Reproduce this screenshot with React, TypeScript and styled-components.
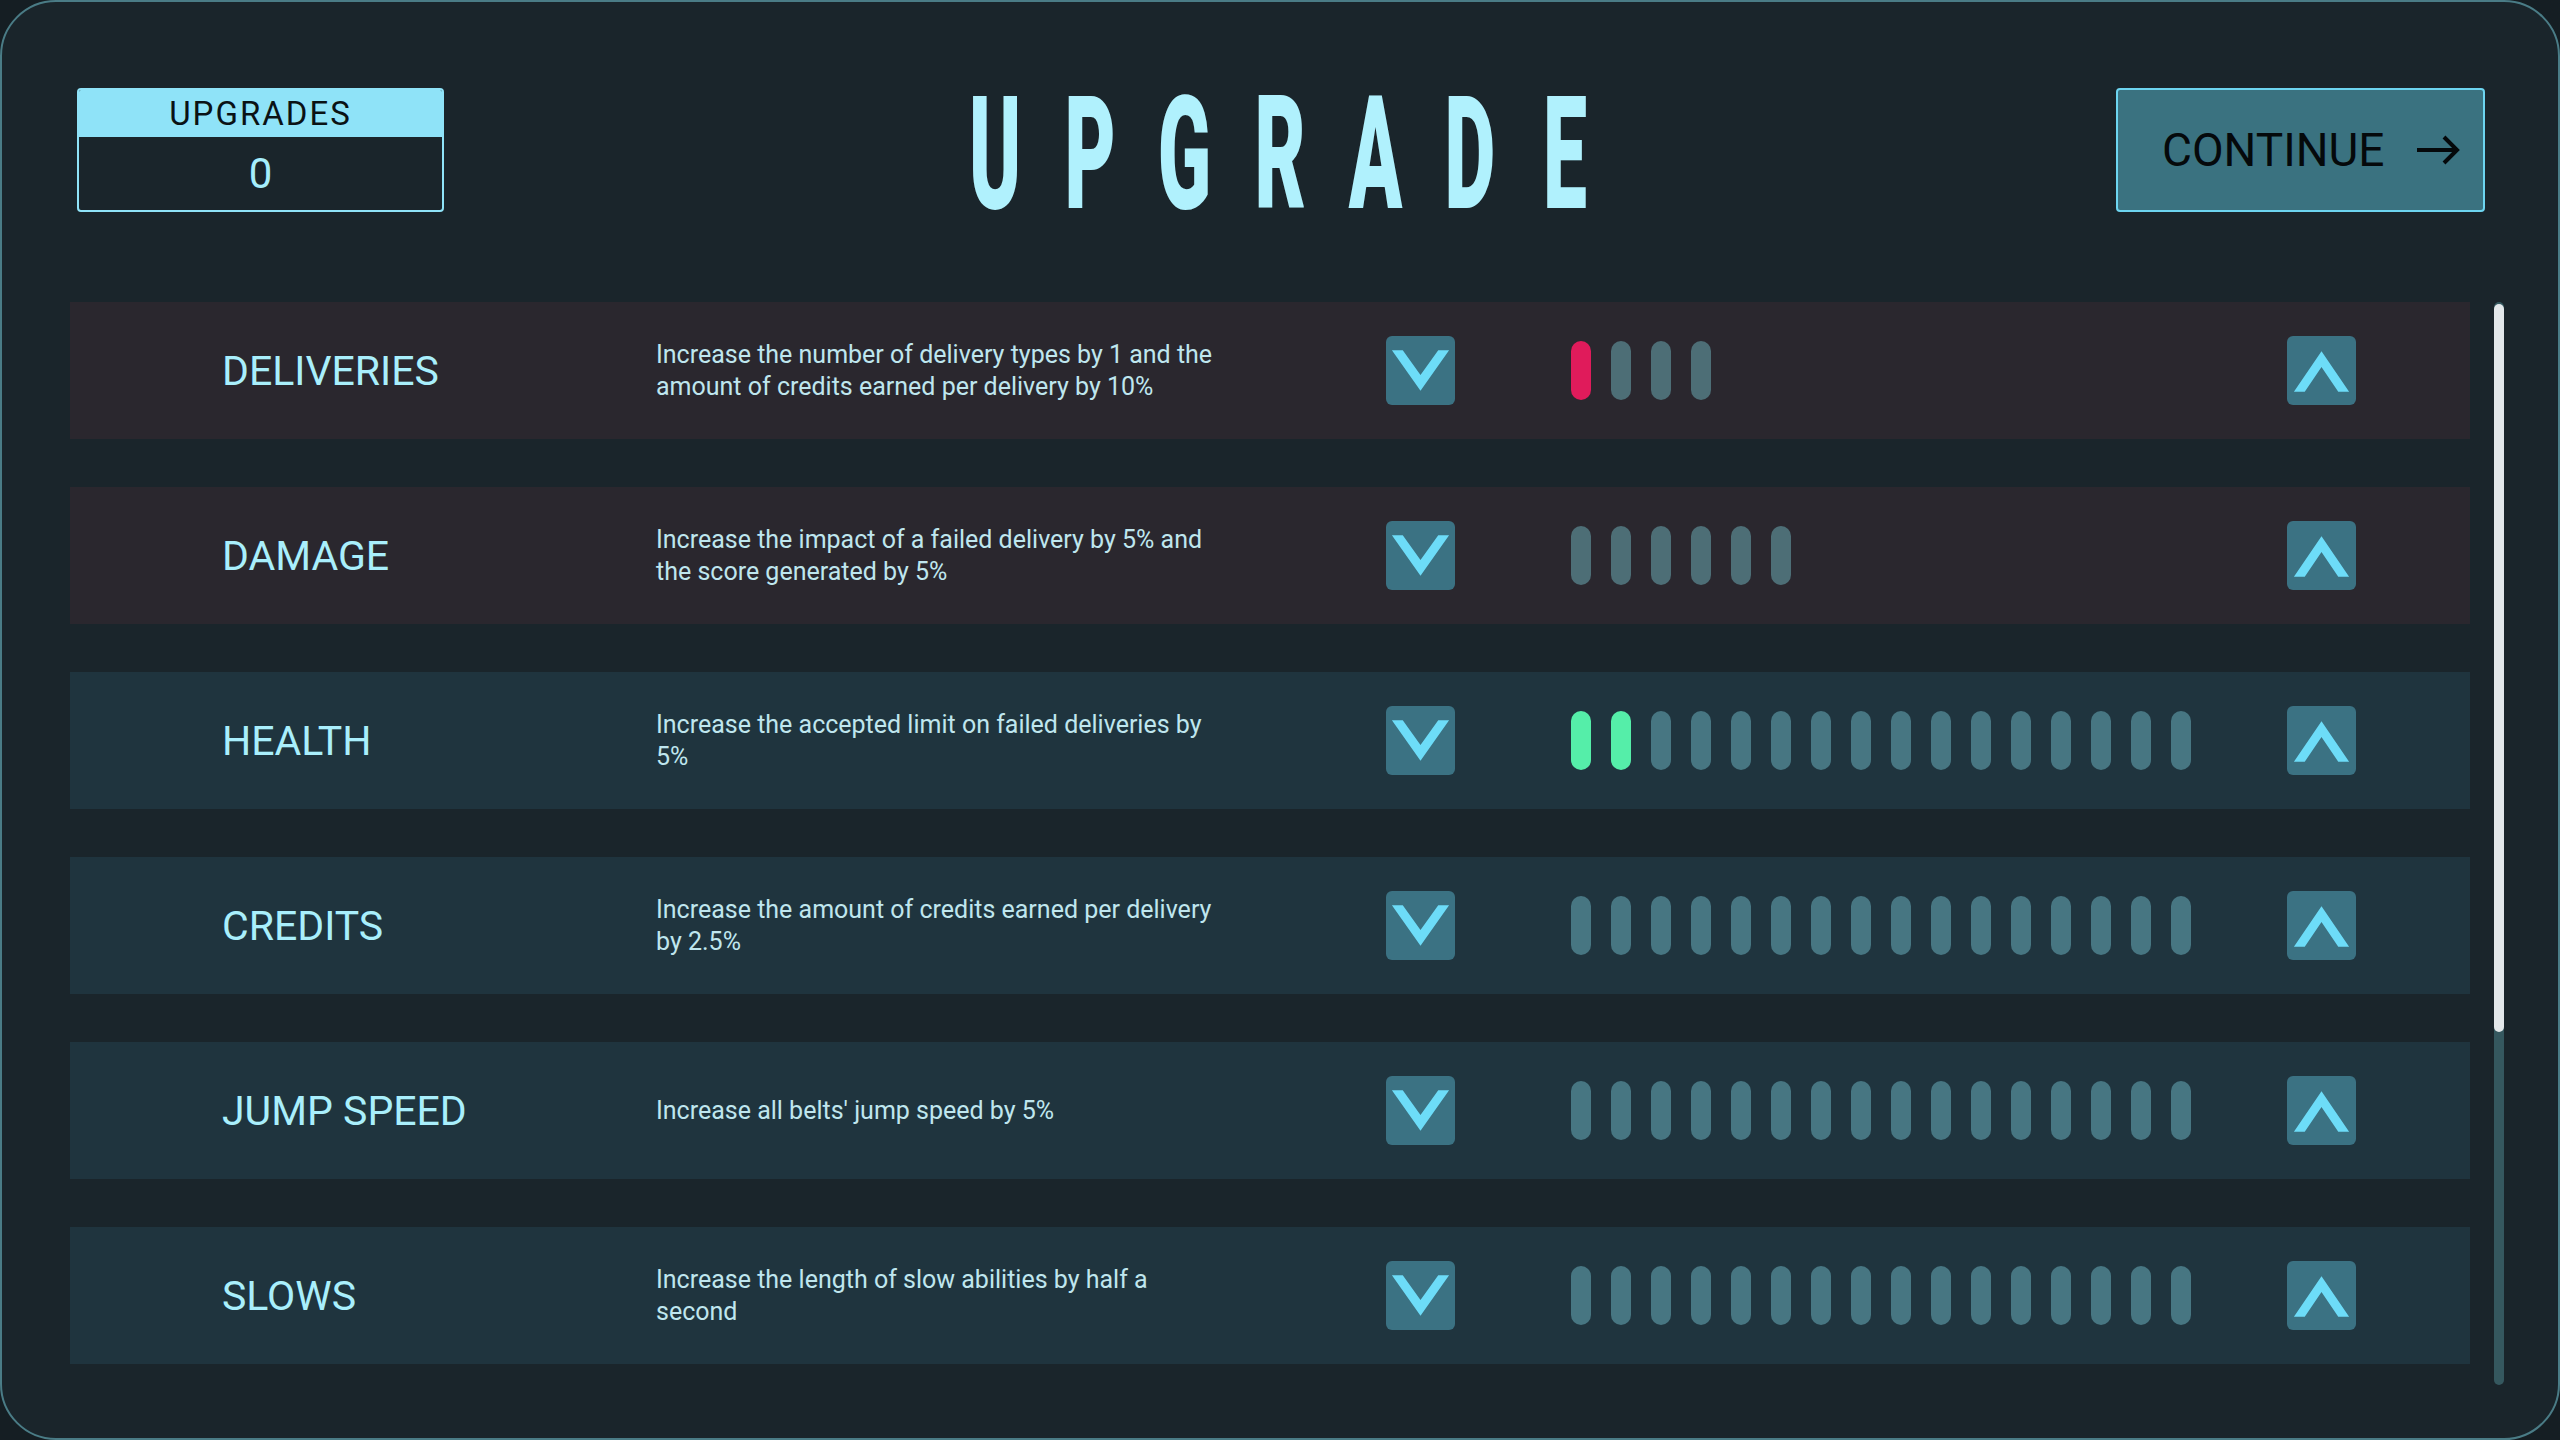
import React from 'react';
import styled, { createGlobalStyle } from 'styled-components';

const GlobalStyle = createGlobalStyle`
  html, body {
    margin: 0;
    padding: 0;
    background: #151e23;
  }
  body {
    width: 2560px;
    height: 1440px;
    overflow: hidden;
    font-family: Roboto, "Liberation Sans", sans-serif;
  }
  * {
    box-sizing: border-box;
  }
`;

const Screen = styled.div`
  width: 2560px;
  height: 1440px;
  background: #1a252b;
  border: 2px solid #4a7c86;
  border-radius: 56px;
  display: flex;
  flex-direction: column;
  padding: 86px 54px 0 68px;
  overflow: hidden;
`;

const Header = styled.header`
  display: grid;
  grid-template-columns: 367px 1fr 369px;
  grid-template-rows: 124px;
  align-items: center;
  height: 124px;
  margin: 0 19px 0 7px;
`;

const UpgradesBox = styled.div`
  height: 124px;
  border: 2px solid #8fe3f8;
  border-radius: 4px;
  display: flex;
  flex-direction: column;
  overflow: hidden;
`;

const BoxHeader = styled.div`
  height: 47px;
  background: #8fe3f8;
  color: #0a1215;
  font-size: 33px;
  letter-spacing: 2px;
  display: flex;
  align-items: center;
  justify-content: center;
`;

const BoxValue = styled.div`
  flex: 1;
  color: #a6eefc;
  font-size: 42px;
  display: flex;
  align-items: center;
  justify-content: center;
`;

const Title = styled.h1`
  margin: 0;
  height: 124px;
  display: flex;
  align-items: center;
  justify-content: center;
  gap: 44px;
  color: #b0f1fd;
`;

const TitleLetter = styled.span`
  width: 51px;
  height: 124px;
  display: flex;
  align-items: center;
  justify-content: center;
  overflow: visible;
`;

const TitleGlyph = styled.span`
  display: block;
  font-size: 157px;
  font-weight: 900;
  line-height: 1;
  transform: translateY(4px) scaleX(0.5);
`;

const ContinueButton = styled.button`
  height: 124px;
  background: #3a7280;
  border: 2px solid #6dd5f0;
  border-radius: 4px;
  color: #05090b;
  font-family: Roboto, "Liberation Sans", sans-serif;
  font-size: 46px;
  display: flex;
  align-items: center;
  gap: 30px;
  padding: 0 0 0 44px;
  cursor: pointer;
`;

const ListArea = styled.div`
  margin-top: 90px;
  height: 1083px;
  display: flex;
  gap: 24px;
`;

const RowList = styled.div`
  width: 2400px;
  display: flex;
  flex-direction: column;
  gap: 48px;
  overflow: hidden;
`;

const ScrollTrack = styled.div`
  width: 10px;
  height: 100%;
  background: #35585f;
  border-radius: 5px;
  padding-top: 2px;
`;

const ScrollThumb = styled.div`
  height: 728px;
  background: #e3e8ea;
  border-radius: 5px;
`;

const Row = styled.div<{ $warm: boolean }>`
  flex: 0 0 137px;
  display: grid;
  grid-template-columns: 434px 730px 69px 1fr 69px;
  align-items: center;
  padding: 0 114px 0 152px;
  background: ${(p) => (p.$warm ? '#2a272e' : '#1f343e')};
`;

const Label = styled.div`
  font-size: 41px;
  color: #a9effc;
`;

const Desc = styled.div`
  max-width: 570px;
  font-size: 25px;
  line-height: 32px;
  color: #bfe6ee;
`;

const ArrowButton = styled.button`
  width: 69px;
  height: 69px;
  padding: 0;
  border: none;
  border-radius: 6px;
  background: #3b7283;
  display: flex;
  align-items: center;
  justify-content: center;
  cursor: pointer;
`;

const Pips = styled.div`
  display: flex;
  gap: 20px;
  padding-left: 116px;
`;

const Pip = styled.span<{ $color: string }>`
  width: 20px;
  height: 59px;
  border-radius: 10px;
  background: ${(p) => p.$color};
`;

type Upgrade = {
  name: string;
  desc: string;
  total: number;
  filled: number;
  fill?: string;
  warm?: boolean;
};

const upgrades: Upgrade[] = [
  {
    name: 'DELIVERIES',
    desc: 'Increase the number of delivery types by 1 and the amount of credits earned per delivery by 10%',
    total: 4,
    filled: 1,
    fill: '#e01b5b',
    warm: true,
  },
  {
    name: 'DAMAGE',
    desc: 'Increase the impact of a failed delivery by 5% and the score generated by 5%',
    total: 6,
    filled: 0,
    warm: true,
  },
  {
    name: 'HEALTH',
    desc: 'Increase the accepted limit on failed deliveries by 5%',
    total: 16,
    filled: 2,
    fill: '#55eea9',
  },
  {
    name: 'CREDITS',
    desc: 'Increase the amount of credits earned per delivery by 2.5%',
    total: 16,
    filled: 0,
  },
  {
    name: 'JUMP SPEED',
    desc: "Increase all belts' jump speed by 5%",
    total: 16,
    filled: 0,
  },
  {
    name: 'SLOWS',
    desc: 'Increase the length of slow abilities by half a second',
    total: 16,
    filled: 0,
  },
];

const ChevronDown = () => (
  <svg width="70" height="70" viewBox="0 0 70 70">
    <polygon points="6,14 17,14 35,39 53,14 64,14 35,55" fill="#6ddcf8" />
  </svg>
);

const ChevronUp = () => (
  <svg width="70" height="70" viewBox="0 0 70 70">
    <polygon points="7,56 35,15 63,56 52,56 35,31 18,56" fill="#6ddcf8" />
  </svg>
);

const ArrowRight = () => (
  <svg width="46" height="34" viewBox="0 0 46 34">
    <path d="M2 17 H42 M29 4 L42 17 L29 30" stroke="#05090b" strokeWidth="4" fill="none" />
  </svg>
);

const App: React.FC = () => {
  return (
    <>
      <GlobalStyle />
      <Screen>
        <Header>
          <UpgradesBox>
            <BoxHeader>UPGRADES</BoxHeader>
            <BoxValue>0</BoxValue>
          </UpgradesBox>
          <Title>
            {'UPGRADE'.split('').map((ch, i) => (
              <TitleLetter key={i}>
                <TitleGlyph>{ch}</TitleGlyph>
              </TitleLetter>
            ))}
          </Title>
          <ContinueButton>
            CONTINUE
            <ArrowRight />
          </ContinueButton>
        </Header>

        <ListArea>
          <RowList>
            {upgrades.map((u) => (
              <Row key={u.name} $warm={!!u.warm}>
                <Label>{u.name}</Label>
                <Desc>{u.desc}</Desc>
                <ArrowButton>
                  <ChevronDown />
                </ArrowButton>
                <Pips>
                  {Array.from({ length: u.total }).map((_, i) => (
                    <Pip
                      key={i}
                      $color={i < u.filled && u.fill ? u.fill : u.warm ? '#4d6e76' : '#477682'}
                    />
                  ))}
                </Pips>
                <ArrowButton>
                  <ChevronUp />
                </ArrowButton>
              </Row>
            ))}
          </RowList>
          <ScrollTrack>
            <ScrollThumb />
          </ScrollTrack>
        </ListArea>
      </Screen>
    </>
  );
};

export default App;
